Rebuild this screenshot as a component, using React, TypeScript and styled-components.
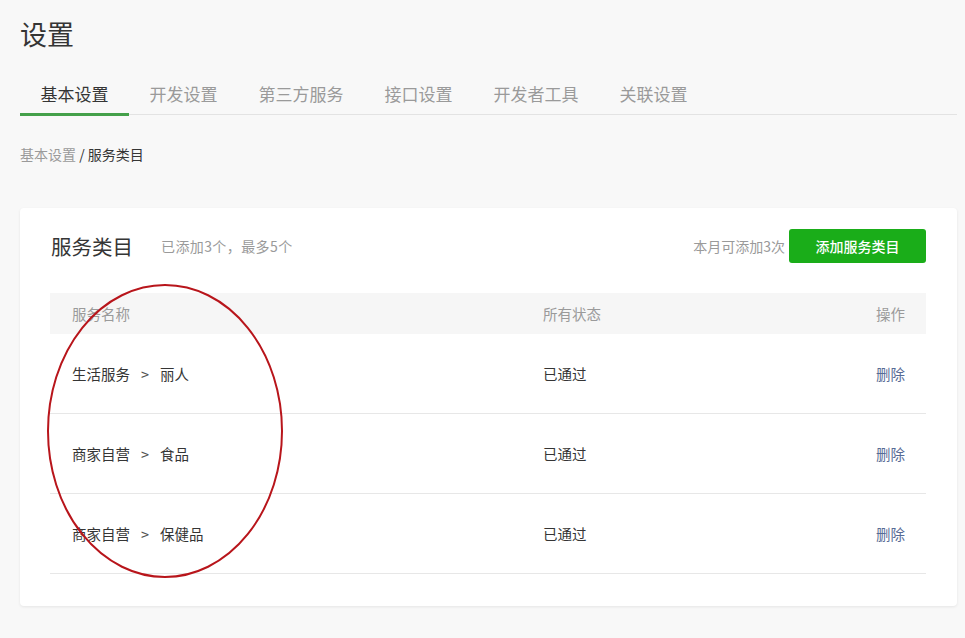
import React from 'react';
import styled, { createGlobalStyle } from 'styled-components';

const GlobalStyle = createGlobalStyle`
  html, body {
    margin: 0;
    padding: 0;
    background: #f8f8f8;
  }
  body {
    font-family: "Noto Sans CJK SC", "Noto Sans", "Liberation Sans", sans-serif;
    color: #353535;
  }
  * {
    box-sizing: border-box;
  }
`;

const Page = styled.div`
  position: relative;
  width: 965px;
  padding: 16px 8px 32px 20px;
`;

const Title = styled.h1`
  margin: 0;
  font-size: 27px;
  font-weight: 400;
  line-height: 36px;
  color: #353535;
`;

const TabBar = styled.div`
  margin-top: 23px;
  display: flex;
  height: 40px;
  border-bottom: 1px solid #e3e3e3;
`;

const Tab = styled.div<{ $active?: boolean }>`
  padding: 0 20.5px;
  height: 41px;
  font-size: 17px;
  line-height: 38px;
  color: ${({ $active }) => ($active ? '#353535' : '#9a9a9a')};
  border-bottom: 3px solid ${({ $active }) => ($active ? '#44a04a' : 'transparent')};
`;

const Crumbs = styled.div`
  margin-top: 29px;
  font-size: 14px;
  line-height: 20px;
  color: #353535;
`;

const CrumbLink = styled.span`
  color: #9a9a9a;
`;

const Card = styled.div`
  margin-top: 44px;
  background: #fff;
  border-radius: 4px;
  box-shadow: 0 1px 3px rgba(0, 0, 0, 0.08);
  padding: 21px 31px 32px 30px;
`;

const CardHead = styled.div`
  display: flex;
  align-items: center;
  height: 34px;
`;

const CardTitle = styled.h2`
  margin: 0 0 0 1px;
  font-size: 20.5px;
  font-weight: 400;
  color: #353535;
`;

const Muted = styled.span`
  font-size: 14px;
  color: #9a9a9a;
`;

const HeadNote = styled(Muted)`
  margin-left: 28px;
  letter-spacing: 0.4px;
`;

const Spacer = styled.div`
  flex: 1;
`;

const AddButton = styled.button`
  margin-left: 4px;
  height: 34px;
  width: 137px;
  border: none;
  border-radius: 3px;
  background: #1aad19;
  color: #fff;
  font-family: inherit;
  font-size: 14px;
  font-weight: 500;
  cursor: pointer;
`;

const Table = styled.div`
  margin-top: 30px;
`;

const Row = styled.div<{ $head?: boolean }>`
  display: grid;
  grid-template-columns: 471px 1fr 120px;
  align-items: center;
  height: ${({ $head }) => ($head ? '41px' : '80px')};
  background: ${({ $head }) => ($head ? '#f6f6f6' : 'transparent')};
  border-bottom: ${({ $head }) => ($head ? 'none' : '1px solid #e7e7e7')};
  font-size: 14.5px;
  color: ${({ $head }) => ($head ? '#9a9a9a' : '#353535')};
`;

const Cell = styled.div<{ $right?: boolean }>`
  padding: 0 21px 0 22px;
  text-align: ${({ $right }) => ($right ? 'right' : 'left')};
`;

const Arrow = styled.span`
  margin: 0 11px;
  color: #555;
`;

const DeleteLink = styled.a`
  color: #576b95;
  text-decoration: none;
  cursor: pointer;
`;

const Annotation = styled.svg`
  position: absolute;
  left: 46px;
  top: 283px;
  pointer-events: none;
`;

const rows = [
  { group: '生活服务', item: '丽人', status: '已通过' },
  { group: '商家自营', item: '食品', status: '已通过' },
  { group: '商家自营', item: '保健品', status: '已通过' },
];

const tabs = ['基本设置', '开发设置', '第三方服务', '接口设置', '开发者工具', '关联设置'];

export default function App() {
  return (
    <>
      <GlobalStyle />
      <Page>
        <Title>设置</Title>
        <TabBar>
          {tabs.map((t, i) => (
            <Tab key={t} $active={i === 0}>{t}</Tab>
          ))}
        </TabBar>
        <Crumbs>
          <CrumbLink>基本设置</CrumbLink> / 服务类目
        </Crumbs>
        <Card>
          <CardHead>
            <CardTitle>服务类目</CardTitle>
            <HeadNote>已添加3个，最多5个</HeadNote>
            <Spacer />
            <Muted>本月可添加3次</Muted>
            <AddButton>添加服务类目</AddButton>
          </CardHead>
          <Table>
            <Row $head>
              <Cell>服务名称</Cell>
              <Cell>所有状态</Cell>
              <Cell $right>操作</Cell>
            </Row>
            {rows.map((r, i) => (
              <Row key={i}>
                <Cell>
                  {r.group}
                  <Arrow>&gt;</Arrow>
                  {r.item}
                </Cell>
                <Cell>{r.status}</Cell>
                <Cell $right>
                  <DeleteLink>删除</DeleteLink>
                </Cell>
              </Row>
            ))}
          </Table>
        </Card>
        <Annotation width="238" height="296" viewBox="0 0 238 296">
          <ellipse cx="119" cy="148" rx="117" ry="146" fill="none" stroke="#b8151b" strokeWidth="2" />
        </Annotation>
      </Page>
    </>
  );
}
